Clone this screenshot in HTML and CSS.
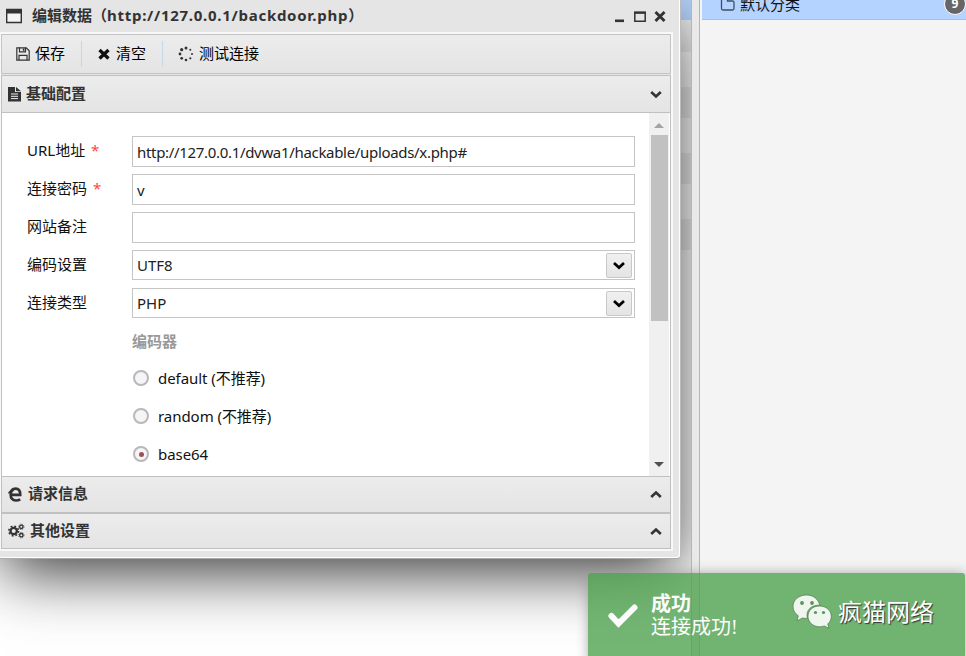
FILE: index.html
```
<!DOCTYPE html>
<html lang="zh-CN">
<head>
    <meta charset="UTF-8">
    <title>编辑数据</title>
    <link rel="stylesheet" href="styles.css">
</head>
<body>
    <div class="main">
        <div class="grid-rows">
            <div class="row selected"></div>
            <div class="row head"></div>
            <div class="row"></div>
            <div class="row alt"></div>
            <div class="row"></div>
            <div class="row alt"></div>
            <div class="row"></div>
            <div class="row alt"></div>
        </div>

        <div class="window">
            <div class="titlebar">
                <svg class="win-icon" width="16" height="16" viewBox="0 0 16 16"><path d="M.7 1.5h14.6v13H.7z" fill="#f4f4f4" stroke="#333" stroke-width="1.4"/><path d="M0 1h16v4.5H0z" fill="#333"/></svg>
                <span class="title">编辑数据（<span class="url">http://127.0.0.1/backdoor.php</span>）</span>
                <svg class="win-buttons" width="52" height="14" viewBox="0 0 52 14"><path d="M1 10.5h9v2.6H1z" fill="#333"/><path d="M20.8 3.5h10.4v8.8H20.8z" fill="none" stroke="#333" stroke-width="1.5"/><path d="M20 2.5h12v2.3H20z" fill="#333"/><path d="M41.5 3l9 9M50.500 3l-9 9" stroke="#333" stroke-width="2.900"/></svg>
            </div>

            <div class="panels">
                <div class="toolbar">
                    <button class="tool save">
                        <svg width="14" height="14" viewBox="0 0 14 14" fill="none" stroke="#333" stroke-width="1.200"><path d="M.8.8h9.400l3 3v9.400H.8z"/><path d="M3.500.8v4h6v-4M3 13V8.300h8V13"/><path d="M6.800 1.500h1.600v2.300H6.800z" fill="#333" stroke="none"/></svg>
                        <span>保存</span>
                    </button>
                    <button class="tool clear">
                        <svg width="12" height="12" viewBox="0 0 12 12"><path d="M1.500 2l9 8.500M10.500 2l-9 8.500" stroke="#111" stroke-width="3.300"/></svg>
                        <span>清空</span>
                    </button>
                    <button class="tool test">
                        <svg width="16" height="16" viewBox="0 0 16 16" fill="#333"><circle cx="8" cy="2" r="1.500"/><circle cx="12.300" cy="3.700" r="1"/><circle cx="14" cy="8" r="1"/><circle cx="12.300" cy="12.300" r="1.100"/><circle cx="8" cy="14" r="1.300"/><circle cx="3.700" cy="12.300" r="1.400"/><circle cx="2" cy="8" r="1.400"/><circle cx="3.700" cy="3.700" r="1.600"/></svg>
                        <span>测试连接</span>
                    </button>
                </div>

                <div class="section first">
                    <svg width="13" height="16" viewBox="0 0 13 16"><path d="M0 1h7v5h6v9.500H0z" fill="#333"/><path d="M8 1l5 4.200H8z" fill="#333"/><path d="M3 8h7M3 10.300h7M3 12.600h7" stroke="#eee"/></svg>
                    <span>基础配置</span>
                    <svg class="arrow" width="12" height="9" viewBox="0 0 12 9"><path d="M1.200 2L6 6.500 10.800 2" fill="none" stroke="#333" stroke-width="2.600"/></svg>
                </div>

                <div class="content">
                    <form class="form">
                        <div class="field">
                            <label>URL地址 <i>*</i></label>
                            <input type="text" value="http://127.0.0.1/dvwa1/hackable/uploads/x.php#">
                        </div>
                        <div class="field">
                            <label>连接密码 <i>*</i></label>
                            <input type="text" value="v">
                        </div>
                        <div class="field">
                            <label>网站备注</label>
                            <input type="text">
                        </div>
                        <div class="field">
                            <label>编码设置</label>
                            <div class="combo">UTF8
                                <span class="drop"><svg width="12" height="9" viewBox="0 0 12 9"><path d="M1 2L6 6.600 11 2" fill="none" stroke="#000" stroke-width="2.700"/></svg></span>
                            </div>
                        </div>
                        <div class="field">
                            <label>连接类型</label>
                            <div class="combo">PHP
                                <span class="drop"><svg width="12" height="9" viewBox="0 0 12 9"><path d="M1 2L6 6.600 11 2" fill="none" stroke="#000" stroke-width="2.700"/></svg></span>
                            </div>
                        </div>
                        <div class="encoder">编码器</div>
                        <div class="option"><span class="radio"></span><span class="text">default (不推荐)</span></div>
                        <div class="option"><span class="radio"></span><span class="text">random (不推荐)</span></div>
                        <div class="option"><span class="radio checked"></span>base64</div>
                    </form>
                    <div class="scrollbar">
                        <span class="up"></span>
                        <span class="thumb"></span>
                        <span class="down"></span>
                    </div>
                </div>

                <div class="section">
                    <svg width="14" height="16" viewBox="0 0 14 16"><path d="M3 7.900H12.200C12.400 3.600 10.500 1.600 7.700 1.600 4.600 1.600 2.800 3.800 2.700 7.500 2.600 11.300 4.700 13.500 7.800 13.500c1.700 0 3.200-.4 4.400-1.200" fill="none" stroke="#333" stroke-width="2.700"/><path d="M.5 6.500C1.500 4.300 3.600 3.500 5.500 3.500" fill="none" stroke="#333" stroke-width="1.300"/></svg>
                    <span>请求信息</span>
                    <svg class="arrow" width="12" height="9" viewBox="0 0 12 9"><path d="M1.200 7L6 2.500 10.800 7" fill="none" stroke="#333" stroke-width="2.600"/></svg>
                </div>
                <div class="section last">
                    <svg width="17" height="16" viewBox="0 0 17 16" fill="none" stroke="#333"><circle cx="5.700" cy="8" r="3.200" stroke-width="2.300"/><circle cx="5.700" cy="8" r="4.900" stroke-width="1.500" stroke-dasharray="1.900 1.950"/><circle cx="13.300" cy="3.800" r="1.700" stroke-width="1.300"/><circle cx="13.300" cy="3.800" r="2.700" stroke-width=".8" stroke-dasharray="1.100 1.020"/><circle cx="13.300" cy="12.200" r="1.700" stroke-width="1.300"/><circle cx="13.300" cy="12.200" r="2.700" stroke-width=".8" stroke-dasharray="1.100 1.020"/></svg>
                    <span>其他设置</span>
                    <svg class="arrow" width="12" height="9" viewBox="0 0 12 9"><path d="M1.200 7L6 2.500 10.800 7" fill="none" stroke="#333" stroke-width="2.600"/></svg>
                </div>
            </div>
        </div>
    </div>

    <div class="splitter"></div>

    <div class="sidebar">
        <div class="category">
            <svg width="16" height="14" viewBox="0 0 16 14"><path d="M1.500 0v8.500q0 1.500 1.500 1.500h9.500q1.500 0 1.500-1.500V2.500q0-1.500-1.500-1.500H7.500V0" fill="none" stroke="#3d4f66" stroke-width="1.300"/></svg>
            <span class="name">默认分类</span>
            <span class="badge">9</span>
        </div>
    </div>

    <div class="toast">
        <svg class="check" width="32" height="26" viewBox="0 0 32 26"><path d="M4.500 14l7 7.500L27.500 5.500" fill="none" stroke="#fff" stroke-width="6" stroke-linecap="round"/></svg>
        <div class="message">
            <b>成功</b>
            <span>连接成功!</span>
        </div>
    </div>

    <div class="watermark">
        <svg width="42" height="36" viewBox="0 0 42 36">
            <g fill="#eef6ee" stroke="#4a7a4a" stroke-width=".7">
                <path d="M14.500 1C6.700 1 1 6 1 12.500c0 4 2 7 5.300 9.300L5 27l5.500-3c1.700.4 3.400.5 5 .4C13 16 20 10.500 27.800 11.200 26.500 5 21 1 14.500 1z"/>
                <path d="M27.500 12C20.700 12 16 16.500 16 22.300s5 10.500 11.500 10.500c1.700 0 3.200-.3 4.700-.9l4.800 2.400-1.300-4.300c2.300-1.900 3.600-4.500 3.600-7.700C39.300 16.500 34.200 12 27.500 12z"/>
            </g>
            <g fill="#5c935c"><circle cx="10" cy="9" r="1.900"/><circle cx="20" cy="9" r="1.900"/><circle cx="23.500" cy="18.500" r="1.600"/><circle cx="31.500" cy="18.500" r="1.600"/></g>
        </svg>
        <span>疯猫网络</span>
    </div>
</body>
</html>
```
FILE: styles.css
```
* {
    margin: 0;
    padding: 0;
    box-sizing: border-box;
}
body {
    display: flex;
    position: relative;
    width: 966px;
    height: 656px;
    overflow: hidden;
    background: #fff;
    color: #111;
    font-family: "Noto Sans", "Noto Sans CJK SC", sans-serif;
    font-size: 15px;
}
svg {
    flex: none;
}

/* list behind the window */
.main {
    position: relative;
    width: 691px;
    overflow: hidden;
}
.row {
    height: 35px;
    background: #fff;
}
.row.alt {
    height: 31px;
    background: #f0f0f0;
}
.row.selected {
    height: 20px;
    background: #b5d3fb;
}
.row.head {
    height: 32px;
    background: #eee;
}

/* edit window */
.window {
    position: absolute;
    left: -2px;
    top: 0;
    width: 683px;
    height: 559px;
    padding: 0 9px 0 3px;
    background: #e5e5e5;
    border-right: 1px solid #bbb;
    border-bottom: 1px solid #aaa;
    border-radius: 0 0 4px 4px;
    box-shadow: inset -1px -1px 0 #fff, 0 18px 60px -5px rgba(0, 0, 0, 0.8);
}
.titlebar {
    display: flex;
    align-items: center;
    height: 34px;
    padding: 0 5px 2px 5px;
    color: #333;
    font-weight: bold;
}
.title {
    margin-left: 10px;
    padding-bottom: 3px;
}
.url {
    letter-spacing: 0.72px;
}
.win-buttons {
    margin-left: auto;
}
.panels {
    box-shadow: 0 0 0 2px #f8f8f8;
}
.toolbar {
    display: flex;
    align-items: center;
    height: 40px;
    padding-bottom: 1px;
    border: 1px solid #c4c4c4;
    background: linear-gradient(#ececec, #e4e4e4);
}
.tool {
    display: flex;
    align-items: center;
    height: 26px;
    border: none;
    background: none;
    color: #000;
    font: inherit;
}
.tool span {
    padding-bottom: 2px;
}
.save {
    width: 80px;
    padding-left: 14px;
    gap: 5px;
    border-right: 1px solid #c5d8e3;
}
.clear {
    width: 81px;
    padding-left: 16px;
    gap: 6px;
    border-right: 1px solid #c5d8e3;
}
.test {
    padding-left: 15px;
    gap: 5px;
}
.section {
    display: flex;
    align-items: center;
    height: 37px;
    padding: 0 8px 0 6px;
    gap: 6px;
    border: 1px solid #c0c0c0;
    background: linear-gradient(#ececec, #e4e4e4);
    color: #333;
    font-weight: bold;
}
.section span {
    padding-bottom: 4px;
}
.section.first {
    height: 38px;
    margin-top: 1px;
    gap: 5px;
}
.section.last {
    height: 36px;
    gap: 5px;
}
.arrow {
    margin-left: auto;
}
.content {
    display: flex;
    height: 363px;
    border: solid #c0c0c0;
    border-width: 0 1px;
    background: #fff;
    overflow: hidden;
}
.form {
    width: 647px;
    padding: 23px 0 0 25px;
}
.field {
    display: flex;
    height: 38px;
}
.field label {
    width: 105px;
    line-height: 28px;
}
.field i {
    margin-left: 2px;
    color: #f44;
    font-style: normal;
}
.field input,
.combo {
    width: 503px;
    height: 31px;
    padding: 1px 4px 0;
    border: 1px solid #c4c4c4;
    background: #fff;
    color: #222;
    font: inherit;
    letter-spacing: -0.32px;
}
.combo {
    display: flex;
    align-items: center;
    justify-content: space-between;
    height: 30px;
    padding: 0 2px 0 4px;
    letter-spacing: 0;
}
.drop {
    display: flex;
    align-items: center;
    justify-content: center;
    width: 26px;
    height: 25px;
    border: 1px solid #c8c8c8;
    border-radius: 2px;
    background: linear-gradient(#f0f0f0, #e4e4e4);
}
.encoder {
    height: 33px;
    padding-left: 105px;
    line-height: 30px;
    color: #999;
    font-weight: bold;
}
.option {
    display: flex;
    align-items: center;
    height: 38px;
    padding-left: 106px;
    letter-spacing: -0.05px;
}
.text {
    padding-bottom: 2px;
}
.radio {
    display: flex;
    align-items: center;
    justify-content: center;
    width: 16px;
    height: 16px;
    margin-right: 9px;
    border: 2px solid #bbb6b9;
    border-radius: 50%;
    background: #f5f5f7;
}
.checked::after {
    content: "";
    width: 5px;
    height: 5px;
    border-radius: 50%;
    background: #9a5252;
}
.scrollbar {
    display: flex;
    flex-direction: column;
    align-items: center;
    width: 20px;
    background: #f0f0f0;
}
.up,
.down {
    border: solid transparent;
    border-width: 0 5px;
}
.up {
    margin: 10px 0 7px;
    border-bottom: 5px solid #a3a3a3;
}
.thumb {
    width: 17px;
    height: 186px;
    background: #c1c1c1;
}
.down {
    margin: auto 0 9px;
    border-top: 5px solid #505050;
}

.splitter {
    width: 9px;
    border: 1px solid #b5b5b5;
    border-width: 0 1px;
    background: #e9e9e9;
}

.sidebar {
    flex: 1;
    padding-left: 2px;
    background: #f4f4f4;
}
.category {
    display: flex;
    position: relative;
    height: 20px;
    padding-left: 18px;
    border-bottom: 1px solid #bcbcbc;
    background: #b5d3ff;
}
.name {
    margin: -7px 0 0 4px;
    line-height: 22px;
}
.badge {
    position: absolute;
    right: 0;
    top: -7px;
    width: 22px;
    height: 22px;
    border: 1px solid #fff;
    border-radius: 50%;
    background: #666;
    color: #fff;
    font-size: 12px;
    font-weight: bold;
    line-height: 20px;
    text-align: center;
}

/* success notice */
.toast {
    display: flex;
    position: absolute;
    left: 588px;
    top: 573px;
    width: 377px;
    height: 90px;
    padding: 20px 0 0 19px;
    border-radius: 3px;
    background: #51a351;
    box-shadow: 0 0 12px #999;
    opacity: 0.8;
    color: #fff;
    font-family: "Liberation Serif", "Noto Sans CJK SC", serif;
    font-size: 20px;
}
.check {
    margin-top: 9px;
}
.message {
    margin-left: 12px;
}
.message b,
.message span {
    display: block;
    line-height: 23px;
}
.watermark {
    display: flex;
    position: absolute;
    left: 792px;
    top: 594px;
    gap: 4px;
    color: #fff;
    font-size: 24px;
    line-height: 36px;
    text-shadow: 1px 1px 1px #333;
}
```
